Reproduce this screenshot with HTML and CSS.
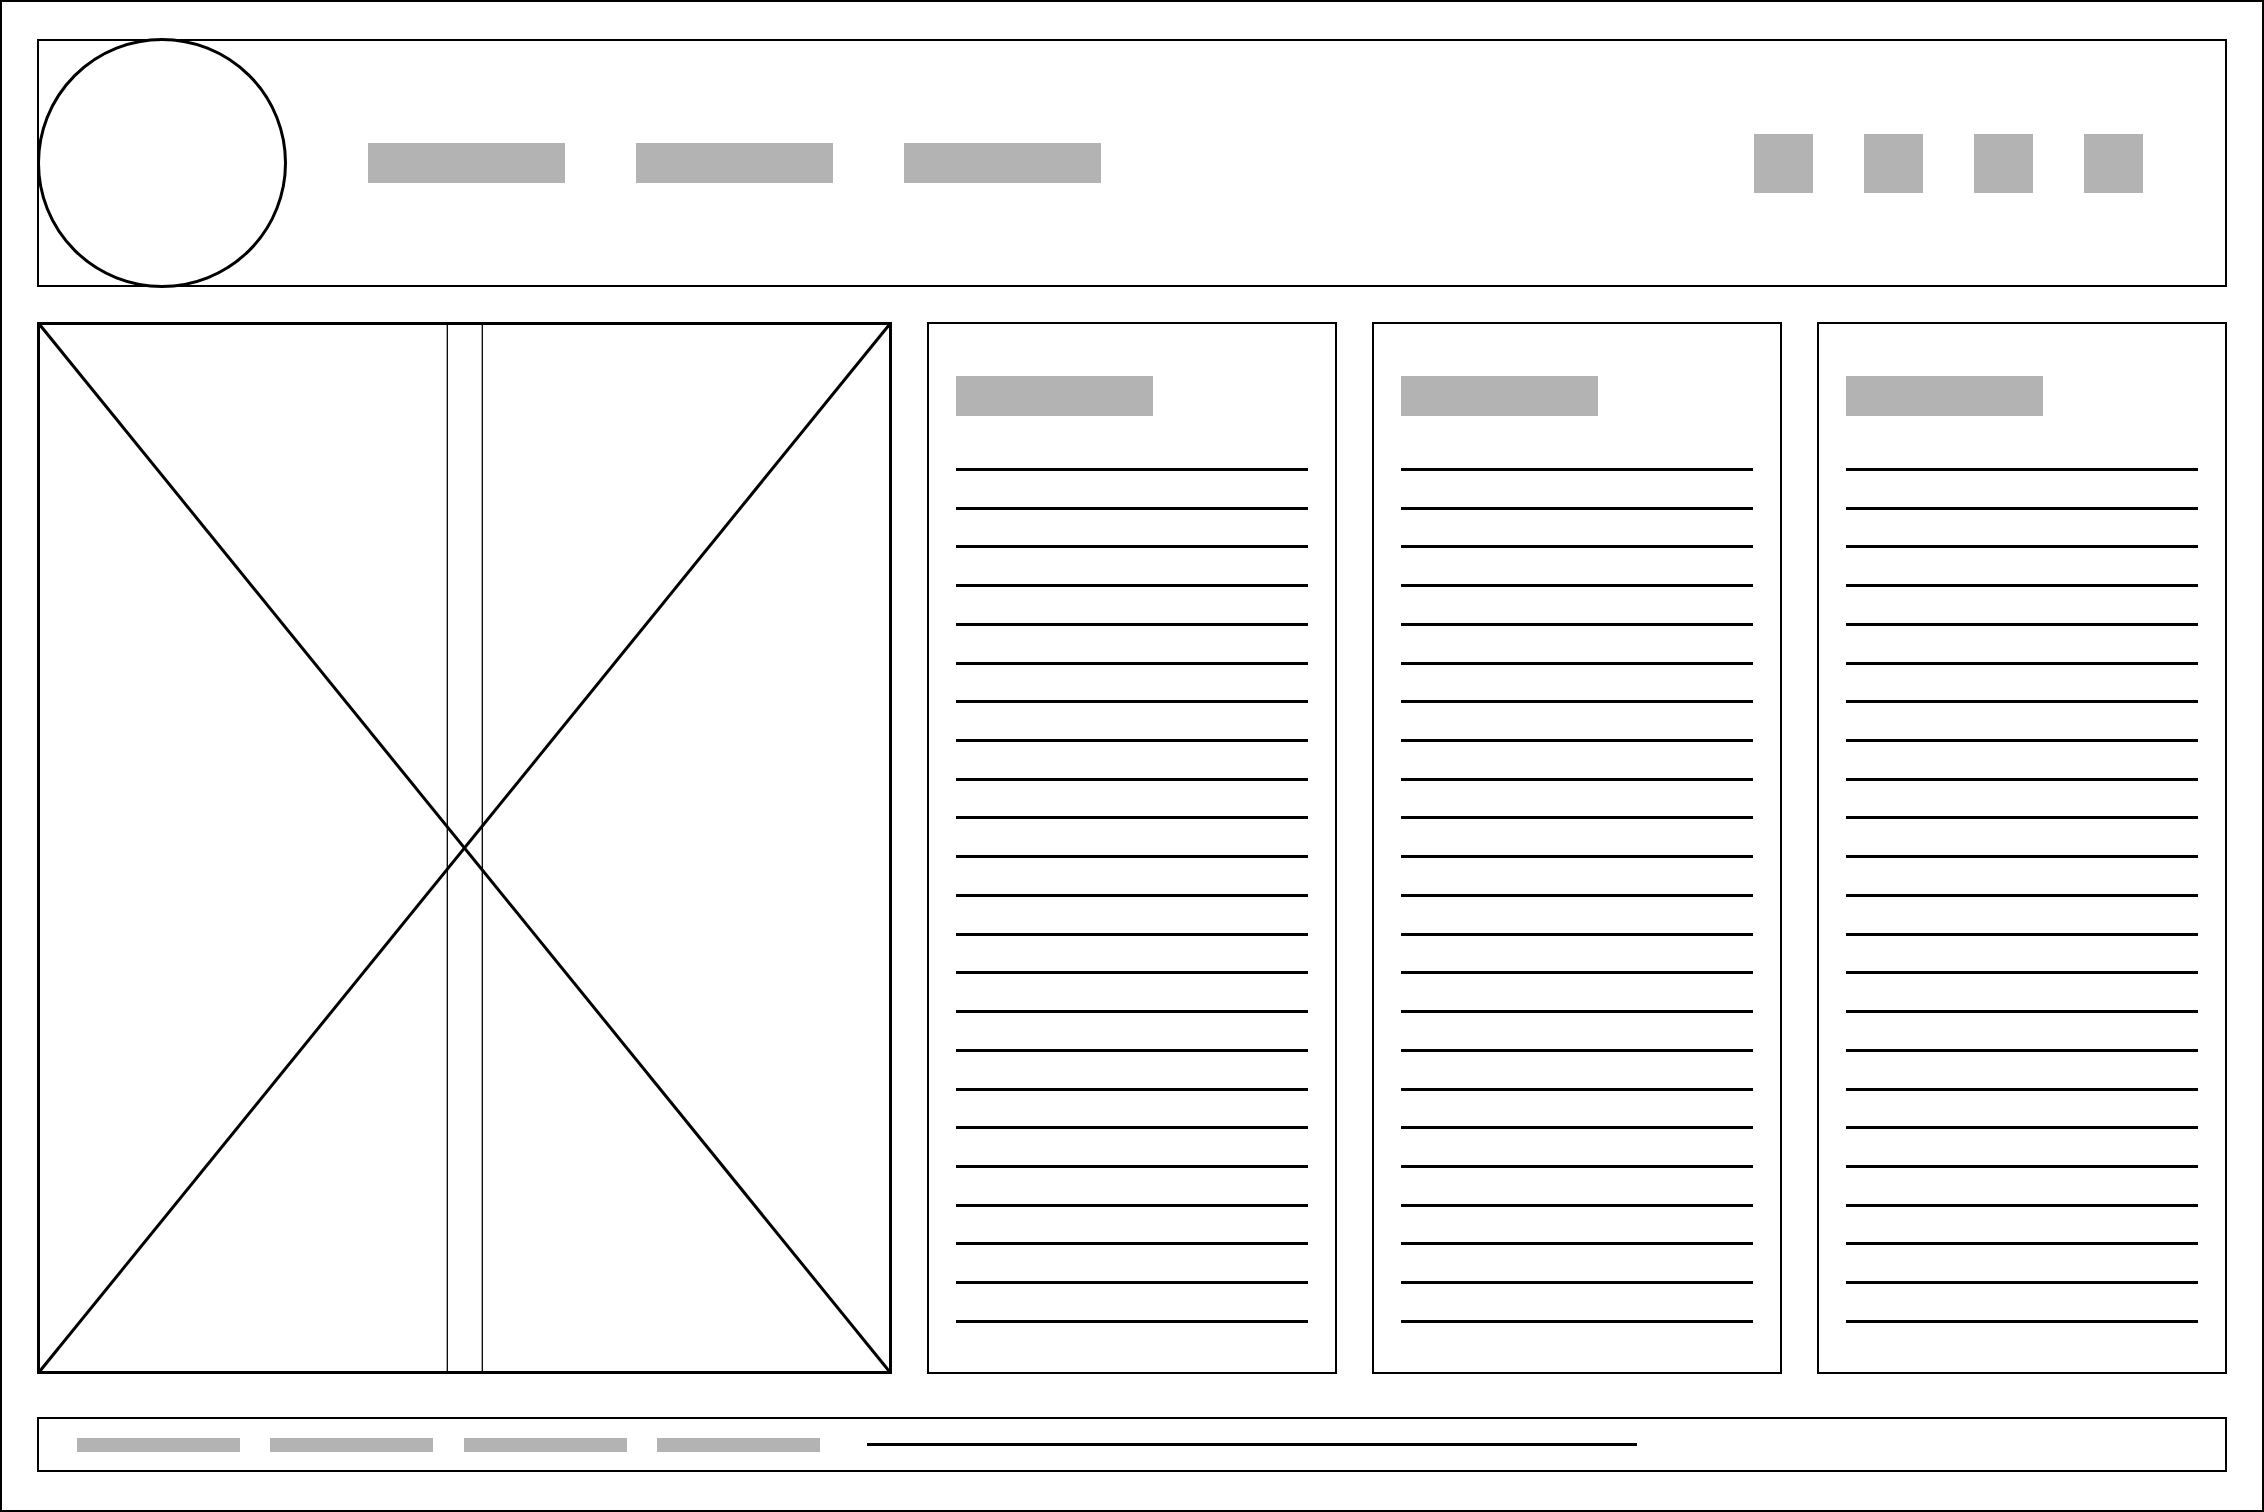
FILE: index.html
```html
<!DOCTYPE html>
<html lang="en">
<head>
    <meta charset="UTF-8">
    <title>Wireframe</title>
    <link rel="stylesheet" href="styles.css">
</head>
<body>
    <div class="frame">
        <!-- Шапка -->
        <header class="header">
            <div class="logo"></div>
            <nav class="nav">
                <div class="nav-item"></div>
                <div class="nav-item"></div>
                <div class="nav-item"></div>
            </nav>
            <div class="icons">
                <div class="icon"></div>
                <div class="icon"></div>
                <div class="icon"></div>
                <div class="icon"></div>
            </div>
        </header>

        <main class="main">
            <!-- Заглушка картинки -->
            <div class="picture">
                <svg viewBox="0 0 849 1046" preserveAspectRatio="none">
                    <line x1="407.3" y1="0" x2="407.3" y2="1046" stroke="#000" stroke-width="1.3"/>
                    <line x1="442.3" y1="0" x2="442.3" y2="1046" stroke="#000" stroke-width="1.3"/>
                    <line x1="0" y1="0" x2="849" y2="1046" stroke="#000" stroke-width="3"/>
                    <line x1="849" y1="0" x2="0" y2="1046" stroke="#000" stroke-width="3"/>
                </svg>
            </div>

            <div class="card">
                <div class="card-title"></div>
                <div class="lines"></div>
            </div>
            <div class="card">
                <div class="card-title"></div>
                <div class="lines"></div>
            </div>
            <div class="card">
                <div class="card-title"></div>
                <div class="lines"></div>
            </div>
        </main>

        <footer class="footer">
            <div class="footer-item"></div>
            <div class="footer-item"></div>
            <div class="footer-item"></div>
            <div class="footer-item"></div>
            <div class="footer-line"></div>
        </footer>
    </div>
    <script>
        // 23 строки текста в каждой колонке
        document.querySelectorAll(".lines").forEach(function (box) {
            for (let i = 0; i < 23; i++) {
                const line = document.createElement("div");
                line.className = "line";
                box.appendChild(line);
            }
        });
    </script>
</body>
</html>
```

FILE: styles.css
```css
html, body {
    margin: 0;
    padding: 0;
    background: #fff;
    font-family: "Liberation Sans", Arial, sans-serif;
}
.frame {
    width: 2264px;
    height: 1512px;
    box-sizing: border-box;
    border: 2px solid #000;
    padding: 37px 35px 0 35px;
    display: flex;
    flex-direction: column;
}
/* Шапка */
.header {
    height: 248px;
    box-sizing: border-box;
    border: 2px solid #000;
    display: flex;
    align-items: center;
    padding-right: 82px;
    margin-bottom: 35px;
    flex-shrink: 0;
}
.logo {
    width: 250px;
    height: 250px;
    box-sizing: border-box;
    border: 3px solid #000;
    border-radius: 50%;
    margin-left: -2px;
    flex-shrink: 0;
    background: #fff;
}
.nav {
    display: flex;
    gap: 71px;
    margin-left: 81px;
}
.nav-item {
    width: 197px;
    height: 40px;
    background: #b3b3b3;
}
.icons {
    display: flex;
    gap: 51px;
    margin-left: auto;
}
.icon {
    width: 59px;
    height: 59px;
    background: #b3b3b3;
}
/* Основная часть */
.main {
    height: 1052px;
    display: grid;
    grid-template-columns: 855px 410px 410px 410px;
    gap: 35px;
    margin-bottom: 43px;
    flex-shrink: 0;
}
.picture {
    box-sizing: border-box;
    border: 3px solid #000;
}
.picture svg {
    display: block;
    width: 100%;
    height: 100%;
}
.card {
    box-sizing: border-box;
    border: 2px solid #000;
    padding: 52px 27px 0 27px;
}
.card-title {
    width: 197px;
    height: 40px;
    background: #b3b3b3;
    margin-bottom: 52px;
}
.lines {
    display: flex;
    flex-direction: column;
    gap: 35.72px;
}
.line {
    height: 3px;
    background: #000;
}
/* Подвал */
.footer {
    height: 55px;
    box-sizing: border-box;
    border: 2px solid #000;
    display: flex;
    align-items: center;
    padding-left: 37.5px;
    flex-shrink: 0;
}
.footer-item {
    width: 163px;
    height: 14px;
    background: #b3b3b3;
    margin-right: 30.6px;
}
.footer-item:nth-child(4) {
    margin-right: 47px;
}
.footer-line {
    width: 770px;
    height: 3px;
    background: #000;
}
```
